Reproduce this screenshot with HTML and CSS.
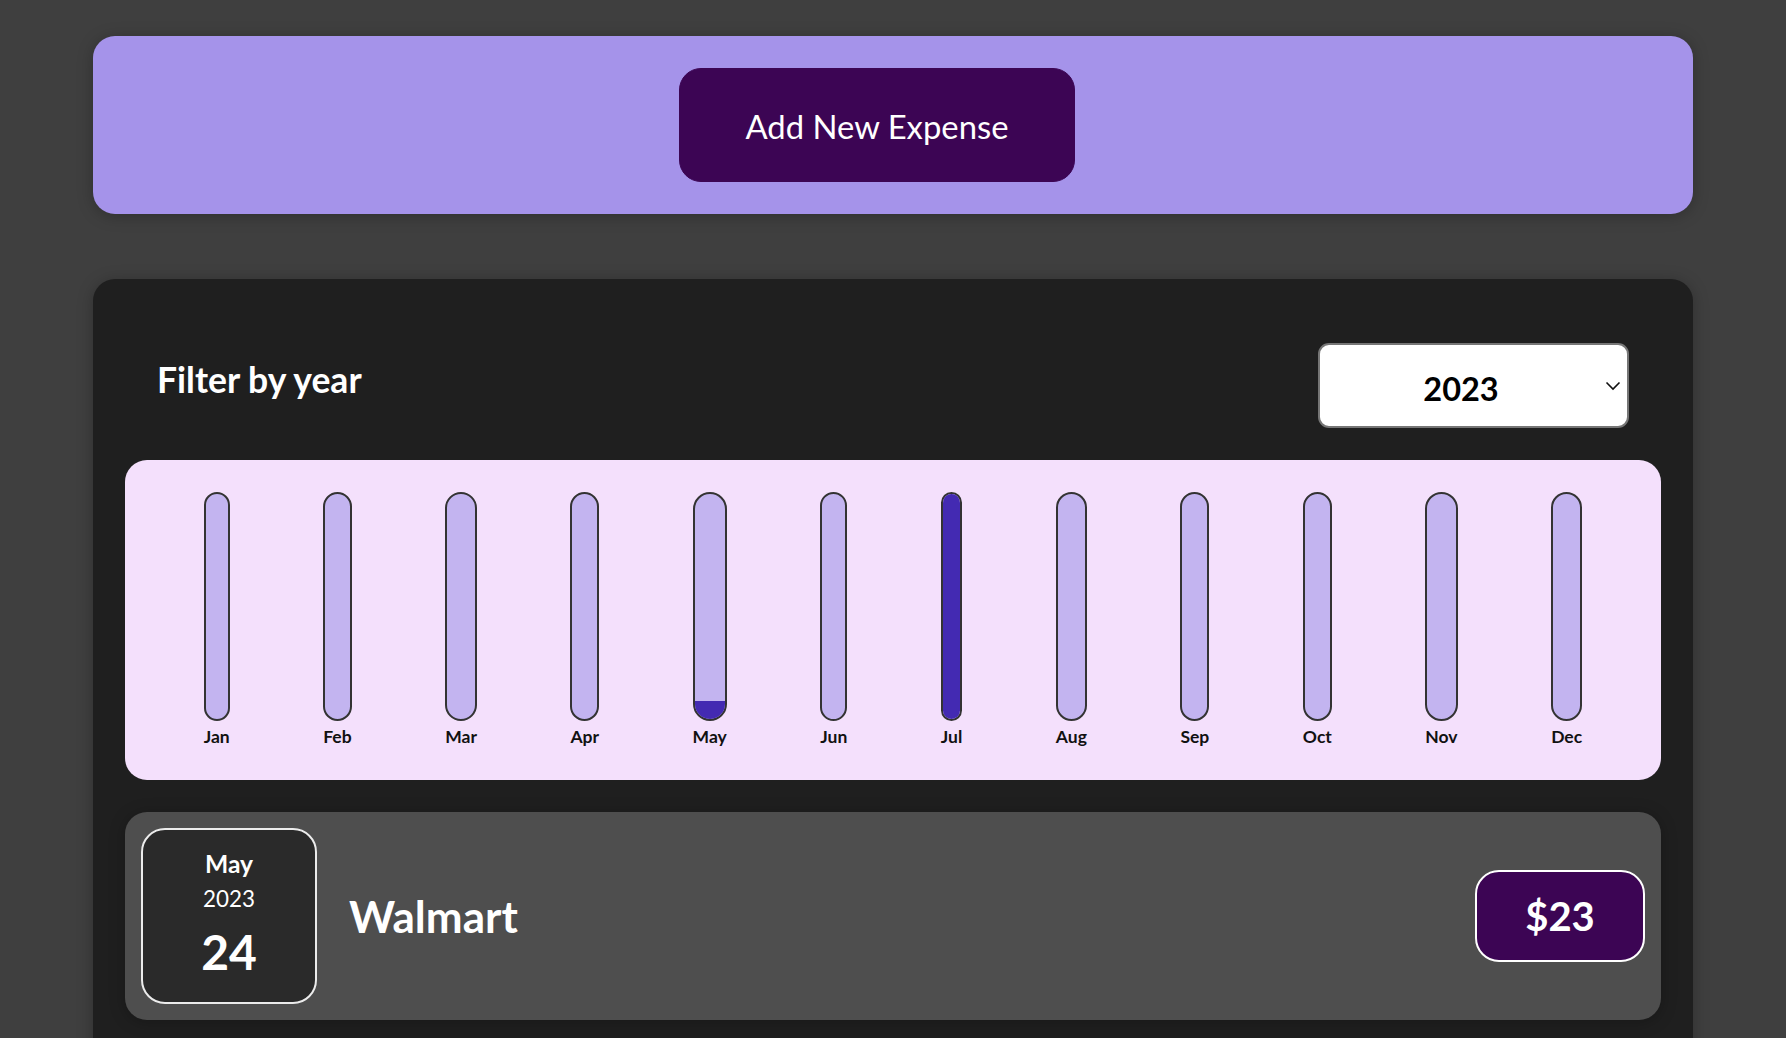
FILE: index.html
```
<!DOCTYPE html>
<html lang="en">
<head>
<meta charset="utf-8">
<title>Expenses</title>
<link rel="stylesheet" href="styles.css">
</head>
<body>
<div class="new-expense">
  <button class="add-btn" type="button">Add New Expense</button>
</div>

<div class="expenses">
  <div class="filter">
    <div class="filter-control">
      <label class="filter-label">Filter by year</label>
      <div class="select-wrap">
        <select class="year-select">
          <option>2023</option>
          <option>2022</option>
          <option>2021</option>
        </select>
        <svg class="chevron" width="16" height="10" viewBox="0 0 16 10"><path d="M1.5 1.5 L8 8 L14.5 1.5" fill="none" stroke="#111" stroke-width="1.6"/></svg>
      </div>
    </div>
  </div>

  <div class="chart">
    <div class="bar"><div class="bar-inner"><div class="bar-fill" style="height:0%"></div></div><div class="bar-label">Jan</div></div>
    <div class="bar"><div class="bar-inner"><div class="bar-fill" style="height:0%"></div></div><div class="bar-label">Feb</div></div>
    <div class="bar"><div class="bar-inner"><div class="bar-fill" style="height:0%"></div></div><div class="bar-label">Mar</div></div>
    <div class="bar"><div class="bar-inner"><div class="bar-fill" style="height:0%"></div></div><div class="bar-label">Apr</div></div>
    <div class="bar"><div class="bar-inner"><div class="bar-fill" style="height:8%"></div></div><div class="bar-label">May</div></div>
    <div class="bar"><div class="bar-inner"><div class="bar-fill" style="height:0%"></div></div><div class="bar-label">Jun</div></div>
    <div class="bar"><div class="bar-inner"><div class="bar-fill" style="height:100%"></div></div><div class="bar-label">Jul</div></div>
    <div class="bar"><div class="bar-inner"><div class="bar-fill" style="height:0%"></div></div><div class="bar-label">Aug</div></div>
    <div class="bar"><div class="bar-inner"><div class="bar-fill" style="height:0%"></div></div><div class="bar-label">Sep</div></div>
    <div class="bar"><div class="bar-inner"><div class="bar-fill" style="height:0%"></div></div><div class="bar-label">Oct</div></div>
    <div class="bar"><div class="bar-inner"><div class="bar-fill" style="height:0%"></div></div><div class="bar-label">Nov</div></div>
    <div class="bar"><div class="bar-inner"><div class="bar-fill" style="height:0%"></div></div><div class="bar-label">Dec</div></div>
  </div>

  <div class="expense-item">
    <div class="expense-date">
      <div class="date-month">May</div>
      <div class="date-year">2023</div>
      <div class="date-day">24</div>
    </div>
    <h2 class="expense-title">Walmart</h2>
    <div class="expense-price">$23</div>
  </div>
</div>
</body>
</html>
```
FILE: styles.css
```
* { box-sizing: border-box; }

body {
  margin: 0;
  padding-top: 36px;
  background-color: #3f3f3f;
  font-family: Lato, "Open Sans", sans-serif;
}

.new-expense {
  width: 1600px;
  margin: 0 auto;
  padding: 32px;
  height: 178px;
  background-color: #a593ea;
  border-radius: 22px;
  text-align: center;
  box-shadow: 0 2px 16px rgba(0, 0, 0, 0.25);
}

.add-btn {
  font-family: inherit;
  font-size: 32.8px;
  font-weight: 400;
  line-height: 47px;
  height: 114px;
  padding: 2px 66px 0;
  margin-right: 32px;
  border: 1px solid #3c0554;
  background-color: #3c0554;
  color: #fff;
  border-radius: 22px;
  cursor: pointer;
}

.expenses {
  width: 1600px;
  margin: 65px auto 0;
  padding: 32px;
  background-color: #1f1f1f;
  border-radius: 22px;
  box-shadow: 0 2px 16px rgba(0, 0, 0, 0.25);
}

.filter {
  color: #fff;
  padding: 0 32px;
}

.filter-control {
  display: flex;
  align-items: center;
  justify-content: space-between;
  margin: 32px 0;
}

.filter-label {
  font-size: 35.5px;
  font-weight: 700;
  margin-bottom: 13px;
}

.select-wrap {
  position: relative;
  width: 311px;
  height: 85px;
}

.year-select {
  appearance: none;
  -webkit-appearance: none;
  width: 100%;
  height: 100%;
  font-family: inherit;
  font-size: 32.5px;
  font-weight: 700;
  color: #000;
  background: #fff;
  border: 2px solid #767676;
  border-radius: 11px;
  text-align: center;
  text-align-last: center;
  padding: 6px 25px 0 0;
}

.chevron {
  position: absolute;
  right: 8px;
  top: 38px;
  pointer-events: none;
}

.chart {
  height: 320px;
  padding: 32px;
  border-radius: 22px;
  background-color: #f4e0fc;
  display: flex;
  justify-content: space-around;
}

.bar {
  height: 100%;
  display: flex;
  flex-direction: column;
  align-items: center;
}

.bar-inner {
  flex: 1;
  width: 100%;
  border: 2px solid #333;
  border-radius: 24px;
  background-color: #c3b4f0;
  overflow: hidden;
  display: flex;
  flex-direction: column;
  justify-content: flex-end;
}

.bar-fill {
  width: 100%;
  background-color: #432ab2;
}

.bar-label {
  font-size: 17.5px;
  font-weight: 700;
  color: #111;
  line-height: 22px;
  padding-top: 5px;
  text-align: center;
}

.expense-item {
  display: flex;
  align-items: center;
  padding: 16px;
  margin: 32px 0;
  border-radius: 22px;
  background-color: #4e4e4e;
  box-shadow: 0 2px 16px rgba(0, 0, 0, 0.25);
}

.expense-date {
  width: 176px;
  height: 176px;
  flex-shrink: 0;
  display: flex;
  flex-direction: column;
  align-items: center;
  justify-content: center;
  border: 2px solid #ececec;
  background-color: #2a2a2a;
  color: #fff;
  border-radius: 24px;
}

.date-month {
  font-size: 24.6px;
  font-weight: 700;
  line-height: 35px;
}

.date-year {
  font-size: 22.4px;
  font-weight: 400;
  line-height: 36px;
}

.date-day {
  font-size: 48px;
  font-weight: 700;
  line-height: 70px;
}

.expense-title {
  flex: 1;
  margin: 0 32px;
  font-size: 44px;
  font-weight: 700;
  color: #fff;
}

.expense-price {
  width: 170px;
  height: 92px;
  display: flex;
  align-items: center;
  justify-content: center;
  font-size: 40px;
  font-weight: 700;
  color: #fff;
  background-color: #3c0554;
  border: 2px solid #fff;
  border-radius: 24px;
}
```
